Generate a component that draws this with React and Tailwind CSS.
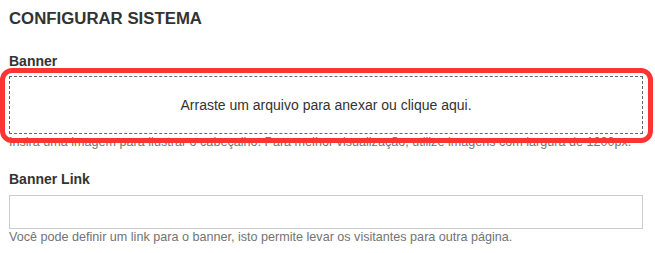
import React from 'react';

const Label = ({ children, className = '' }) => (
  <label className={`block text-[14px] leading-[18px] font-bold text-[#333] ${className}`}>{children}</label>
);

const Help = ({ children }) => (
  <p className="text-[12.6px] leading-[17px] text-[#737373]">{children}</p>
);

const App = () => {
  return (
    <div className="w-[655px] h-[253px] bg-white font-['Liberation_Sans',Arial,sans-serif] text-[#333]">
      <div className="w-[643px] pl-[9px]">
        <h1 className="pt-[9px] text-[16.8px] leading-[19px] font-bold">CONFIGURAR SISTEMA</h1>

        <div className="mt-[24px]">
          <Label>Banner</Label>
          <div className="relative mt-[6px]">
            <div className="h-[58px] border border-dashed border-[#666] flex items-center justify-center text-[14px] cursor-pointer">
              Arraste um arquivo para anexar ou clique aqui.
            </div>
            <div className="absolute -left-[9px] -top-[8px] -right-[10px] -bottom-[9px] rounded-[12px] border-[5px] border-[#fe3434] pointer-events-none" />
          </div>
          <Help>Insira uma imagem para ilustrar o cabeçalho. Para melhor visualização, utilize imagens com largura de 1200px.</Help>
        </div>

        <div className="mt-[19px]">
          <Label>Banner Link</Label>
          <input type="text" className="mt-[7px] block w-full h-[34px] border border-[#ccc] bg-white px-3 text-[13px] outline-none" />
          <Help>Você pode definir um link para o banner, isto permite levar os visitantes para outra página.</Help>
        </div>
      </div>
    </div>
  );
};

export default App;
